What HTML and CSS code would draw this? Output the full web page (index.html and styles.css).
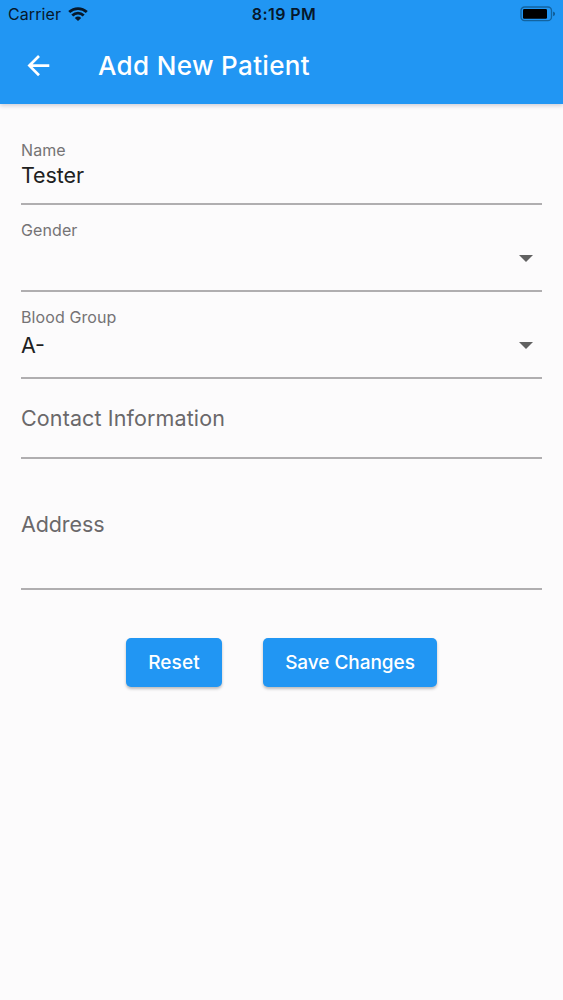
FILE: index.html
```html
<!DOCTYPE html>
<html lang="en">
<head>
<meta charset="utf-8">
<title>Add New Patient</title>
<link rel="stylesheet" href="styles.css">
</head>
<body>
<header class="app-header">
  <div class="status-bar">
    <div class="status-left">
      <span class="carrier">Carrier</span>
      <svg class="wifi" width="20" height="14" viewBox="0 0 20 14" fill="none" stroke="#06182b" stroke-width="2.8">
        <path d="M1.2 5.1C6.2.4 13.8.4 18.8 5.1"/>
        <path d="M4.3 8.6C7.6 5.4 12.4 5.4 15.7 8.6"/>
        <path d="M6.8 10.9Q10 8.2 13.2 10.9L10 14Z" fill="#06182b" stroke="none"/>
      </svg>
    </div>
    <span class="clock">8:19 PM</span>
    <svg class="battery" width="36" height="16" viewBox="0 0 36 16">
      <rect x="1" y="1" width="30.5" height="13.6" rx="3.6" fill="none" stroke="#1263a0" stroke-width="1.3"/>
      <rect x="3" y="3" width="24" height="9.8" rx="1.2" fill="#000"/>
      <path d="M33.2 5.4Q35 6.2 35 7.8T33.2 10.2Z" fill="#0d5488"/>
    </svg>
  </div>
  <div class="toolbar">
    <svg class="back" width="24" height="24" viewBox="0 0 24 24" fill="none" stroke="#fff" stroke-width="2.7">
      <path d="M23.3 11.6H4M13 2L3.4 11.6L13 21.2"/>
    </svg>
    <h1 class="title">Add New Patient</h1>
  </div>
</header>
<main class="form">
  <div class="field field-name">
    <span class="label">Name</span>
    <span class="value tester">Tester</span>
  </div>
  <div class="field field-select">
    <span class="label gender">Gender</span>
    <div class="select-row">
      <span class="value"></span>
      <svg class="caret" width="14" height="7" viewBox="0 0 14 7"><path d="M0 0H14L7 7Z" fill="#616161"/></svg>
    </div>
  </div>
  <div class="field field-select">
    <span class="label blood">Blood Group</span>
    <div class="select-row">
      <span class="value choice">A-</span>
      <svg class="caret" width="14" height="7" viewBox="0 0 14 7"><path d="M0 0H14L7 7Z" fill="#616161"/></svg>
    </div>
  </div>
  <div class="field field-contact"><span class="placeholder contact">Contact Information</span></div>
  <div class="field field-address"><span class="placeholder address">Address</span></div>
  <div class="actions">
    <button class="button reset"><span>Reset</span></button>
    <button class="button save"><span>Save Changes</span></button>
  </div>
</main>
</body>
</html>
```

FILE: styles.css
```css
* { box-sizing: border-box; }
body {
  margin: 0;
  min-height: 1000px;
  background: #fcfbfc;
  font-family: Inter, "Liberation Sans", sans-serif;
  color: #202020;
}
.app-header {
  height: 104px;
  background: #2196f3;
  box-shadow: 0 2px 4px rgba(40, 40, 80, .2);
}
.status-bar {
  display: grid;
  grid-template-columns: 1fr auto 1fr;
  align-items: center;
  height: 28px;
  padding: 0 7px 0 8px;
  color: #06182b;
}
.status-left { display: flex; align-items: center; gap: 7px; }
.carrier { font-size: 16px; letter-spacing: .1px; }
.clock { font-size: 16px; font-weight: 600; letter-spacing: .4px; padding-left: 4px; }
.battery { justify-self: end; }
.toolbar {
  display: flex;
  align-items: center;
  height: 76px;
  padding-left: 26px;
}
.title {
  margin: 0 0 0 48px;
  color: #fff;
  font-size: 26px;
  line-height: 32px;
  font-weight: 500;
  letter-spacing: .35px;
}
.form { padding: 0 21px; }
.field {
  display: flex;
  flex-direction: column;
  border-bottom: 2px solid #b0aeb0;
  white-space: nowrap;
}
.field-name { height: 101px; padding-top: 36px; }
.field-select { height: 87px; padding-top: 15px; }
.field-contact { height: 80px; padding-top: 24px; }
.field-address { height: 131px; padding-top: 50px; }
.label { color: #757375; font-size: 16px; line-height: 20px; letter-spacing: .1px; }
.value { font-size: 21.5px; line-height: 30px; }
.tester { letter-spacing: -.1px; }
.choice { padding-bottom: 2px; }
.placeholder { color: #6a686a; font-size: 21.5px; line-height: 30px; letter-spacing: .12px; }
.address { letter-spacing: -.1px; }
.select-row {
  display: flex;
  align-items: center;
  justify-content: space-between;
  height: 37px;
  padding-right: 9px;
}
.actions { display: flex; justify-content: center; gap: 41px; padding-top: 48px; }
.button {
  height: 49px;
  padding: 0;
  border: 0;
  border-radius: 5px;
  background: #2196f3;
  box-shadow: 0 2px 3px rgba(0, 0, 0, .25);
  color: #fff;
  font: 500 19px/24px Inter, "Liberation Sans", sans-serif;
  letter-spacing: -.05px;
}
.reset { width: 96px; letter-spacing: .1px; }
.save { width: 174px; }
```
